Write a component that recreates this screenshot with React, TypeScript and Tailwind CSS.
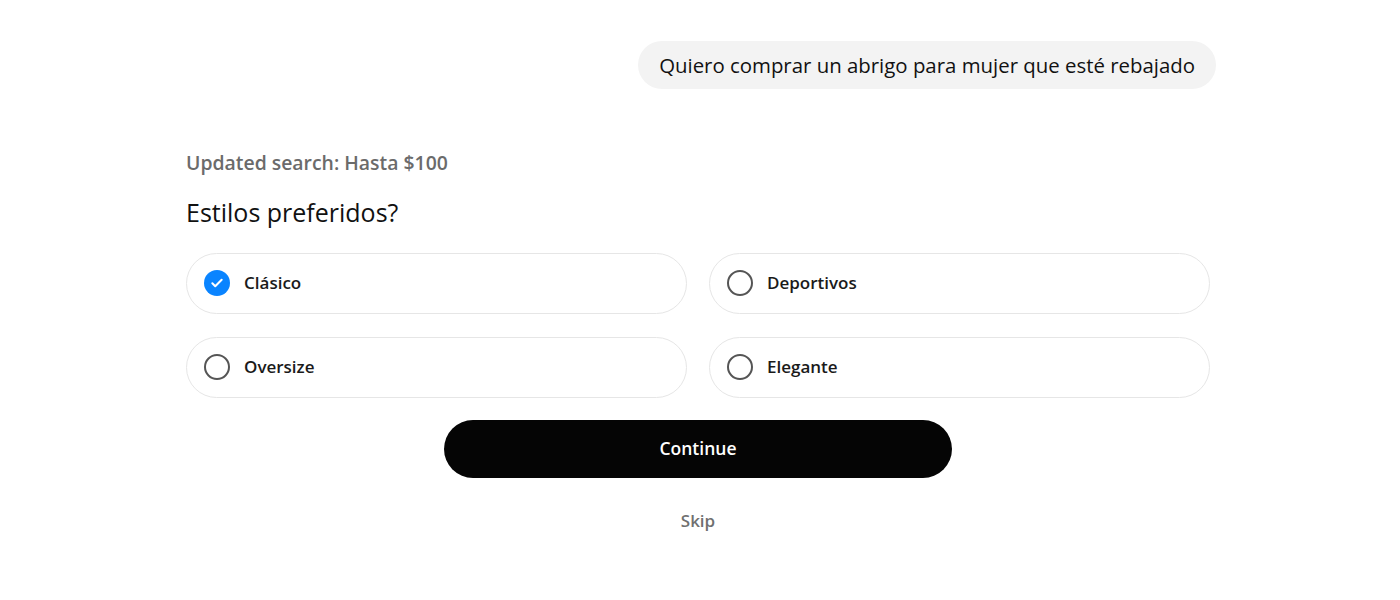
import { useState } from 'react';

const options = ['Clásico', 'Deportivos', 'Oversize', 'Elegante'];

function App() {
  const [selected, setSelected] = useState<string[]>(['Clásico']);

  const toggle = (o: string) =>
    setSelected((s) => (s.includes(o) ? s.filter((x) => x !== o) : [...s, o]));

  return (
    <div className="min-h-screen bg-white font-['Open_Sans',sans-serif] text-[#111]">
      <div className="w-[1024px] ml-[186px] pt-[41px] flex flex-col">
        {/* User message */}
        <div className="self-end -mr-[6px] bg-[#f3f3f3] rounded-full h-12 px-[21px] flex items-center text-[20.4px] text-[#111]">
          Quiero comprar un abrigo para mujer que esté rebajado
        </div>

        <p className="mt-[59px] text-[19.4px] font-semibold text-[#6b6b6b]">Updated search: Hasta $100</p>
        <h2 className="mt-[17px] text-[25px] font-medium text-[#111]">Estilos preferidos?</h2>

        <div className="mt-[21px] grid grid-cols-2 gap-x-[22px] gap-y-[23px]">
          {options.map((o) => {
            const on = selected.includes(o);
            return (
              <button
                key={o}
                onClick={() => toggle(o)}
                className="h-[61px] rounded-full border border-[#e6e6e6] flex items-center gap-[14px] pl-[17px] text-left"
              >
                {on ? (
                  <span className="w-[26px] h-[26px] rounded-full bg-[#0a84ff] flex items-center justify-center">
                    <svg width="14" height="14" viewBox="0 0 24 24" fill="none" stroke="white" strokeWidth="3.5" strokeLinecap="round" strokeLinejoin="round">
                      <path d="M4 12.5l5 5L20 6.5" />
                    </svg>
                  </span>
                ) : (
                  <span className="w-[26px] h-[26px] rounded-full border-2 border-[#555]" />
                )}
                <span className="text-[17px] font-semibold text-[#1a1a1a]">{o}</span>
              </button>
            );
          })}
        </div>

        <button className="mt-[22px] self-center w-[508px] h-[58px] rounded-full bg-[#050505] text-white text-[17.5px] font-semibold">
          Continue
        </button>
        <button className="mt-[30px] self-center text-[17px] font-semibold text-[#707070]">Skip</button>
      </div>
    </div>
  );
}

export default App;
